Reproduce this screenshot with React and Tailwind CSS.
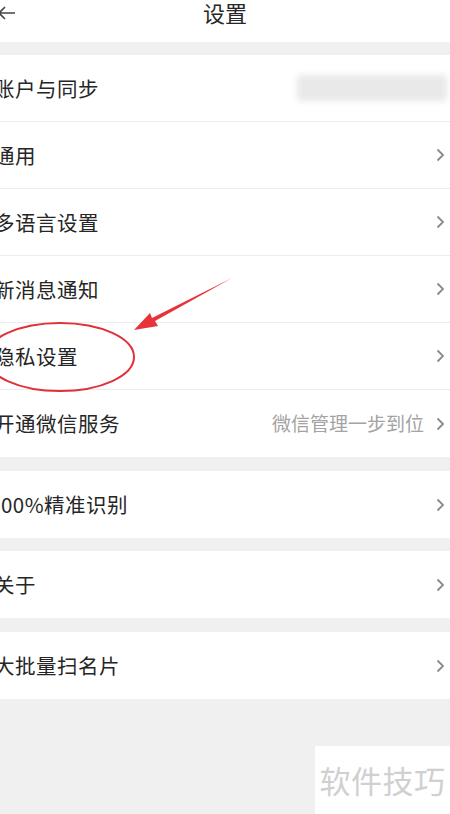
import React from "react";

function Chevron() {
  return (
    <svg width="9" height="14" viewBox="0 0 9 14" className="shrink-0">
      <path d="M1.5 1.5 L7 7 L1.5 12.5" fill="none" stroke="#8a8a8a" strokeWidth="1.8" />
    </svg>
  );
}

function Row({ label, extra, last, blur, noChevron, shift }) {
  return (
    <div
      className={
        "h-[67px] flex items-center justify-between pr-[5px] " +
        (last ? "" : "border-b border-[#ececec]")
      }
    >
      <span
        className={
          (shift ? "ml-[-11px]" : "ml-[-6px]") +
          " text-[20.5px] text-[#262626] tracking-[0.5px]"
        }
      >
        {label}
      </span>
      <div className="flex items-center gap-[12px]">
        {extra && <span className="text-[19px] text-[#a3a3a3]">{extra}</span>}
        {blur && <div className="w-[150px] h-[26px] mr-[-2px] bg-[#e9e9e9] blur-[3px] rounded" />}
        {!noChevron && <Chevron />}
      </div>
    </div>
  );
}

export default function App() {
  const font = { fontFamily: '"Noto Sans CJK SC", "Noto Sans", sans-serif' };
  return (
    <div className="relative w-[450px] h-[814px] overflow-hidden bg-[#f0f0f0]" style={font}>
      <div className="h-[42px] bg-white flex items-start justify-center relative">
        <svg width="20" height="16" viewBox="0 0 20 16" className="absolute left-[-3px] top-[5px]">
          <path d="M18 8 H2 M8 2 L2 8 L8 14" fill="none" stroke="#444" strokeWidth="1.6" />
        </svg>
        <span className="text-[22px] text-[#262626] leading-none mt-[1px]">设置</span>
      </div>

      <div className="mt-[13px] bg-white">
        <Row label="账户与同步" blur noChevron />
        <Row label="通用" />
        <Row label="多语言设置" />
        <Row label="新消息通知" />
        <Row label="隐私设置" />
        <Row label="开通微信服务" extra="微信管理一步到位" last />
      </div>

      <div className="mt-[14px] bg-white">
        <Row label="100%精准识别" last shift />
      </div>

      <div className="mt-[13px] bg-white">
        <Row label="关于" last />
      </div>

      <div className="mt-[14px] bg-white">
        <Row label="大批量扫名片" last />
      </div>

      <div className="flex justify-end pt-[47px]">
        <div className="w-[135px] h-[68px] bg-white flex items-center justify-center">
          <span className="text-[31px] text-[#d0d0d0] tracking-[0.5px]">软件技巧</span>
        </div>
      </div>

      <svg className="absolute left-0 top-0 pointer-events-none" width="450" height="814" viewBox="0 0 450 814">
        <ellipse cx="60" cy="357" rx="74" ry="34" fill="none" stroke="#e0303a" strokeWidth="2" />
        <path d="M232 278 L152 318 L150 313 L134 330 L158 326 L155 321 Z" fill="#e8323a" />
      </svg>
    </div>
  );
}
